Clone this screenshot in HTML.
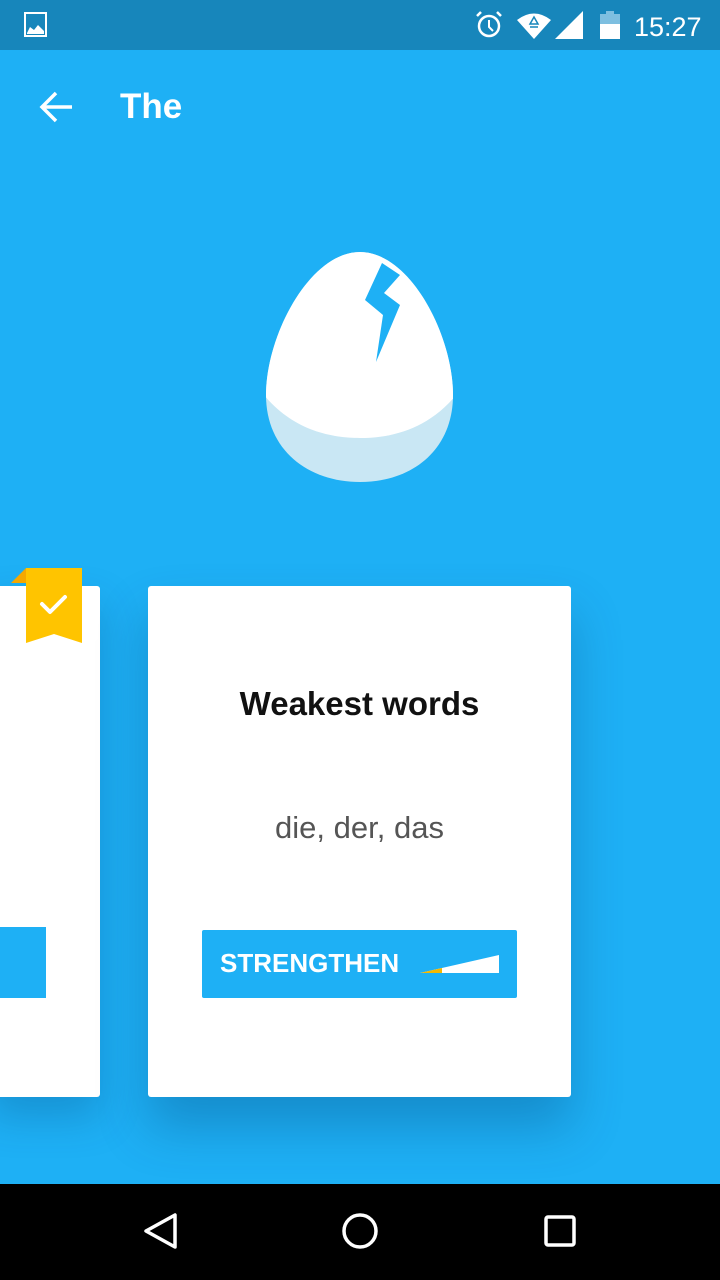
<!DOCTYPE html>
<html><head><style>
body{margin:0;width:720px;height:1280px;background:#1eb0f5;position:relative;overflow:hidden;font-family:"Liberation Sans",sans-serif}
.abs{position:absolute}
</style></head><body>
<div class="abs" style="left:0;top:0;width:720px;height:50px;background:#1786bb"></div>
<svg class="abs" style="left:0;top:0" width="720" height="50">
<rect x="25" y="13" width="21" height="23" fill="none" stroke="#fff" stroke-width="2"/>
<path d="M27 33 L30 27 L34 30 L38 25 L44 31 L44 34 L27 34Z" fill="#fff"/>
<circle cx="489" cy="26" r="10" fill="none" stroke="#fff" stroke-width="2.5"/>
<path d="M489 20 V27 L493 31" stroke="#fff" stroke-width="2" fill="none"/>
<path d="M477 16 L481 12 M501 16 L497 12" stroke="#fff" stroke-width="2.5"/>
<path d="M517 20 Q534 7 551 20 L534 39Z" fill="#fff"/>
<path d="M534 17 L538 24 L530 24Z M530 27 L538 27" stroke="#1786bb" stroke-width="1.5" fill="none"/>
<path d="M555 39 L583 11 L583 39Z" fill="#fff"/>
<rect x="600" y="14" width="20" height="25" fill="#7ebfe0"/>
<rect x="606" y="11" width="8" height="4" fill="#7ebfe0"/>
<rect x="600" y="24" width="20" height="15" fill="#fff"/>
<text x="634" y="36" font-size="27" fill="#fff" font-family="Liberation Sans">15:27</text>
</svg>
<svg class="abs" style="top:90px;left:38px" width="36" height="34"><path d="M4 17 H34 M18 3 L4 17 L18 31" stroke="#fff" stroke-width="3.5" fill="none"/></svg>
<div class="abs" style="left:120px;top:87px;color:#fff;font-size:35px;font-weight:bold">The</div>
<svg class="abs" style="left:260px;top:245px" width="200" height="245">
<defs><clipPath id="e"><path d="M100 7 C150 7 193 90 193 150 C193 205 152 237 100 237 C48 237 6 205 6 150 C6 90 50 7 100 7Z"/></clipPath></defs>
<g clip-path="url(#e)">
<rect width="200" height="245" fill="#c9e7f4"/>
<path d="M0 0 H200 V145 C170 185 130 193 100 193 C70 193 30 185 0 145Z" fill="#fff"/>
</g>
<path d="M122 18 L105 55 L123 70 L116 117 L140 60 L124 48 L140 30Z" fill="#1eb0f5"/>
</svg>
<div class="abs" style="left:-10px;top:586px;width:110px;height:511px;background:#fff;border-radius:3px;box-shadow:0 20px 40px rgba(0,60,110,.25)"></div>
<div class="abs" style="left:0;top:927px;width:46px;height:71px;background:#1eb0f5"></div>
<svg class="abs" style="left:8px;top:566px" width="76" height="80">
<path d="M18 2 L3 17 L18 17Z" fill="#f5a800"/>
<path d="M18 2 H74 V77 L46 68 L18 77Z" fill="#ffc400"/>
<path d="M34 38 L42 46 L57 31" stroke="#fff" stroke-width="4" fill="none" stroke-linecap="round" stroke-linejoin="round"/>
</svg>
<div class="abs" style="left:148px;top:586px;width:423px;height:511px;background:#fff;border-radius:3px;box-shadow:0 30px 50px rgba(0,60,110,.3)"></div>
<div class="abs" style="left:148px;top:685px;width:423px;text-align:center;font-size:33px;font-weight:bold;color:#111">Weakest words</div>
<div class="abs" style="left:148px;top:810px;width:423px;text-align:center;font-size:31px;color:#555">die, der, das</div>
<div class="abs" style="left:202px;top:930px;width:315px;height:68px;background:#1eb0f5;border-radius:2px"></div>
<div class="abs" style="left:220px;top:948px;font-size:26px;font-weight:bold;color:#fff">STRENGTHEN</div>
<svg class="abs" style="left:420px;top:955px" width="80" height="20"><path d="M0 18 L79 0 V18Z" fill="#fff"/><path d="M0 18 L22 13 V18Z" fill="#f5b800"/></svg>
<div class="abs" style="left:0;top:1184px;width:720px;height:96px;background:#000"></div>
<svg class="abs" style="left:0;top:1184px" width="720" height="96">
<path d="M175 31 V63 L146 47Z" fill="none" stroke="#fff" stroke-width="3.5" stroke-linejoin="round"/>
<circle cx="360" cy="47" r="16" fill="none" stroke="#fff" stroke-width="3.5"/>
<rect x="546" y="33" width="28" height="28" fill="none" stroke="#fff" stroke-width="3.5" rx="2"/>
</svg>
</body></html>
